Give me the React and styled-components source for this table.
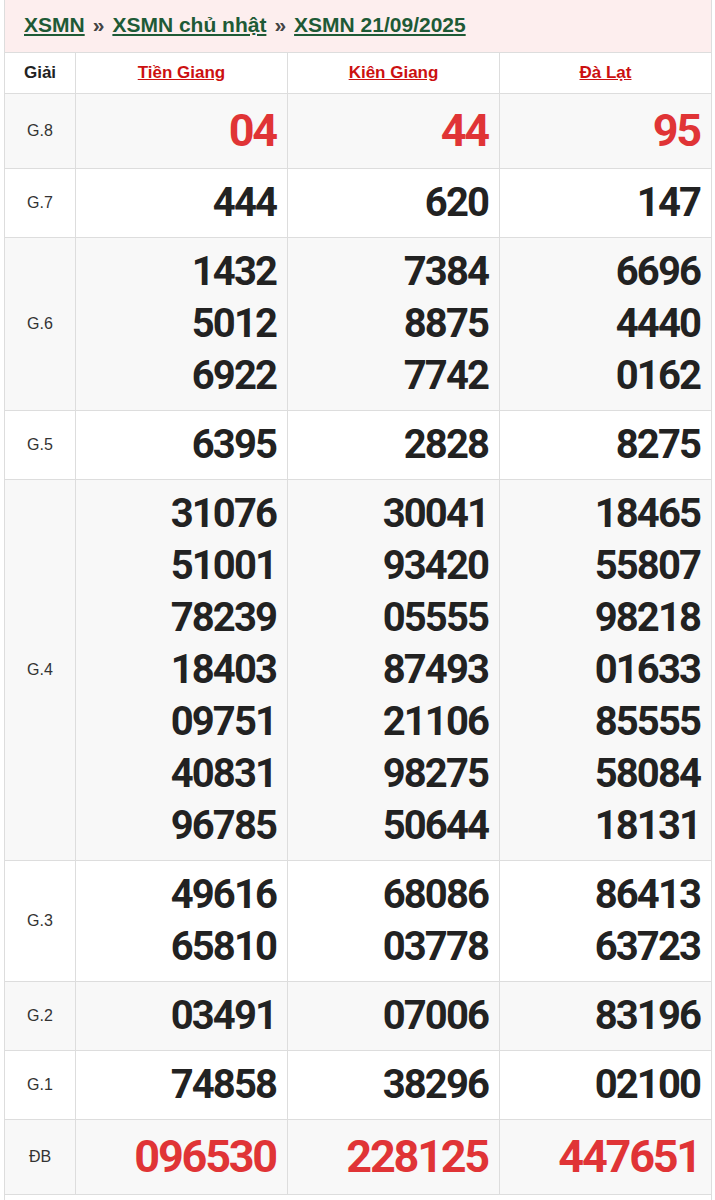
import React from "react";
import styled, { createGlobalStyle } from "styled-components";

const GlobalStyle = createGlobalStyle`
  body {
    margin: 0;
    background: #fff;
    font-family: "Liberation Sans", Arial, sans-serif;
  }
`;

const provinces = ["Tiền Giang", "Kiên Giang", "Đà Lạt"];

const prizes = [
  { name: "G.8", big: true, red: true, values: [["04"], ["44"], ["95"]] },
  { name: "G.7", values: [["444"], ["620"], ["147"]] },
  {
    name: "G.6",
    values: [
      ["1432", "5012", "6922"],
      ["7384", "8875", "7742"],
      ["6696", "4440", "0162"],
    ],
  },
  { name: "G.5", values: [["6395"], ["2828"], ["8275"]] },
  {
    name: "G.4",
    values: [
      ["31076", "51001", "78239", "18403", "09751", "40831", "96785"],
      ["30041", "93420", "05555", "87493", "21106", "98275", "50644"],
      ["18465", "55807", "98218", "01633", "85555", "58084", "18131"],
    ],
  },
  {
    name: "G.3",
    values: [
      ["49616", "65810"],
      ["68086", "03778"],
      ["86413", "63723"],
    ],
  },
  { name: "G.2", values: [["03491"], ["07006"], ["83196"]] },
  { name: "G.1", values: [["74858"], ["38296"], ["02100"]] },
  {
    name: "ĐB",
    big: true,
    red: true,
    values: [["096530"], ["228125"], ["447651"]],
  },
];

export default function App() {
  return (
    <>
      <GlobalStyle />
      <Box>
        <Breadcrumb>
          <Crumb href="#">XSMN</Crumb>
          <Sep>»</Sep>
          <Crumb href="#">XSMN chủ nhật</Crumb>
          <Sep>»</Sep>
          <Crumb href="#">XSMN 21/09/2025</Crumb>
        </Breadcrumb>
        <Results>
          <colgroup>
            <col width="71" />
            <col width="212" />
            <col width="212" />
            <col width="212" />
          </colgroup>
          <thead>
            <tr>
              <HeadCell>Giải</HeadCell>
              {provinces.map(p => (
                <HeadCell key={p}>
                  <Province href="#">{p}</Province>
                </HeadCell>
              ))}
            </tr>
          </thead>
          <tbody>
            {prizes.map((prize, i) => (
              <Row key={prize.name} $shaded={i % 2 === 0}>
                <PrizeName>{prize.name}</PrizeName>
                {prize.values.map((list, j) => (
                  <NumberCell key={j}>
                    {list.map(n => (
                      <Num key={n} $big={prize.big} $red={prize.red}>
                        {n}
                      </Num>
                    ))}
                  </NumberCell>
                ))}
              </Row>
            ))}
          </tbody>
        </Results>
      </Box>
    </>
  );
}

const Box = styled.div`
  margin-left: 4px;
  width: 706px;
  min-height: 1200px;
  border-left: 1px solid #ddd;
  border-right: 1px solid #ddd;
`;

const Breadcrumb = styled.div`
  height: 52px;
  box-sizing: border-box;
  padding: 0 0 3px 19px;
  display: flex;
  align-items: center;
  background: #fdeeee;
  font-size: 21px;
  font-weight: 700;
`;

const Crumb = styled.a`
  color: #1e5a36;
  text-decoration: underline;
`;

const Sep = styled.span`
  color: #444;
  margin: 0 8px;
`;

const Results = styled.table`
  width: 707px;
  margin-left: -1px;
  border-collapse: collapse;
  table-layout: fixed;

  td,
  th {
    border: 1px solid #ddd;
  }
`;

const HeadCell = styled.th`
  height: 40px;
  padding: 0;
  font-size: 17px;
  font-weight: 700;
  color: #222;
  text-align: center;
`;

const Province = styled.a`
  color: #cc1010;
  text-decoration: underline;
`;

const Row = styled.tr`
  background: ${p => (p.$shaded ? "#f8f8f8" : "#fff")};
`;

const PrizeName = styled.td`
  text-align: center;
  font-size: 16px;
  color: #333;
  padding: 0;
`;

const NumberCell = styled.td`
  padding: 8px 11px 8px 0;
  text-align: right;
  vertical-align: middle;
`;

const Num = styled.div`
  font-family: Roboto, "Liberation Sans", sans-serif;
  font-weight: 700;
  font-size: ${p => (p.$big ? "45px" : "40px")};
  line-height: ${p => (p.$big ? "58px" : "52px")};
  letter-spacing: ${p => (p.$big ? "-2.2px" : "-1.9px")};
  color: ${p => (p.$red ? "#e03436" : "#222")};
`;
